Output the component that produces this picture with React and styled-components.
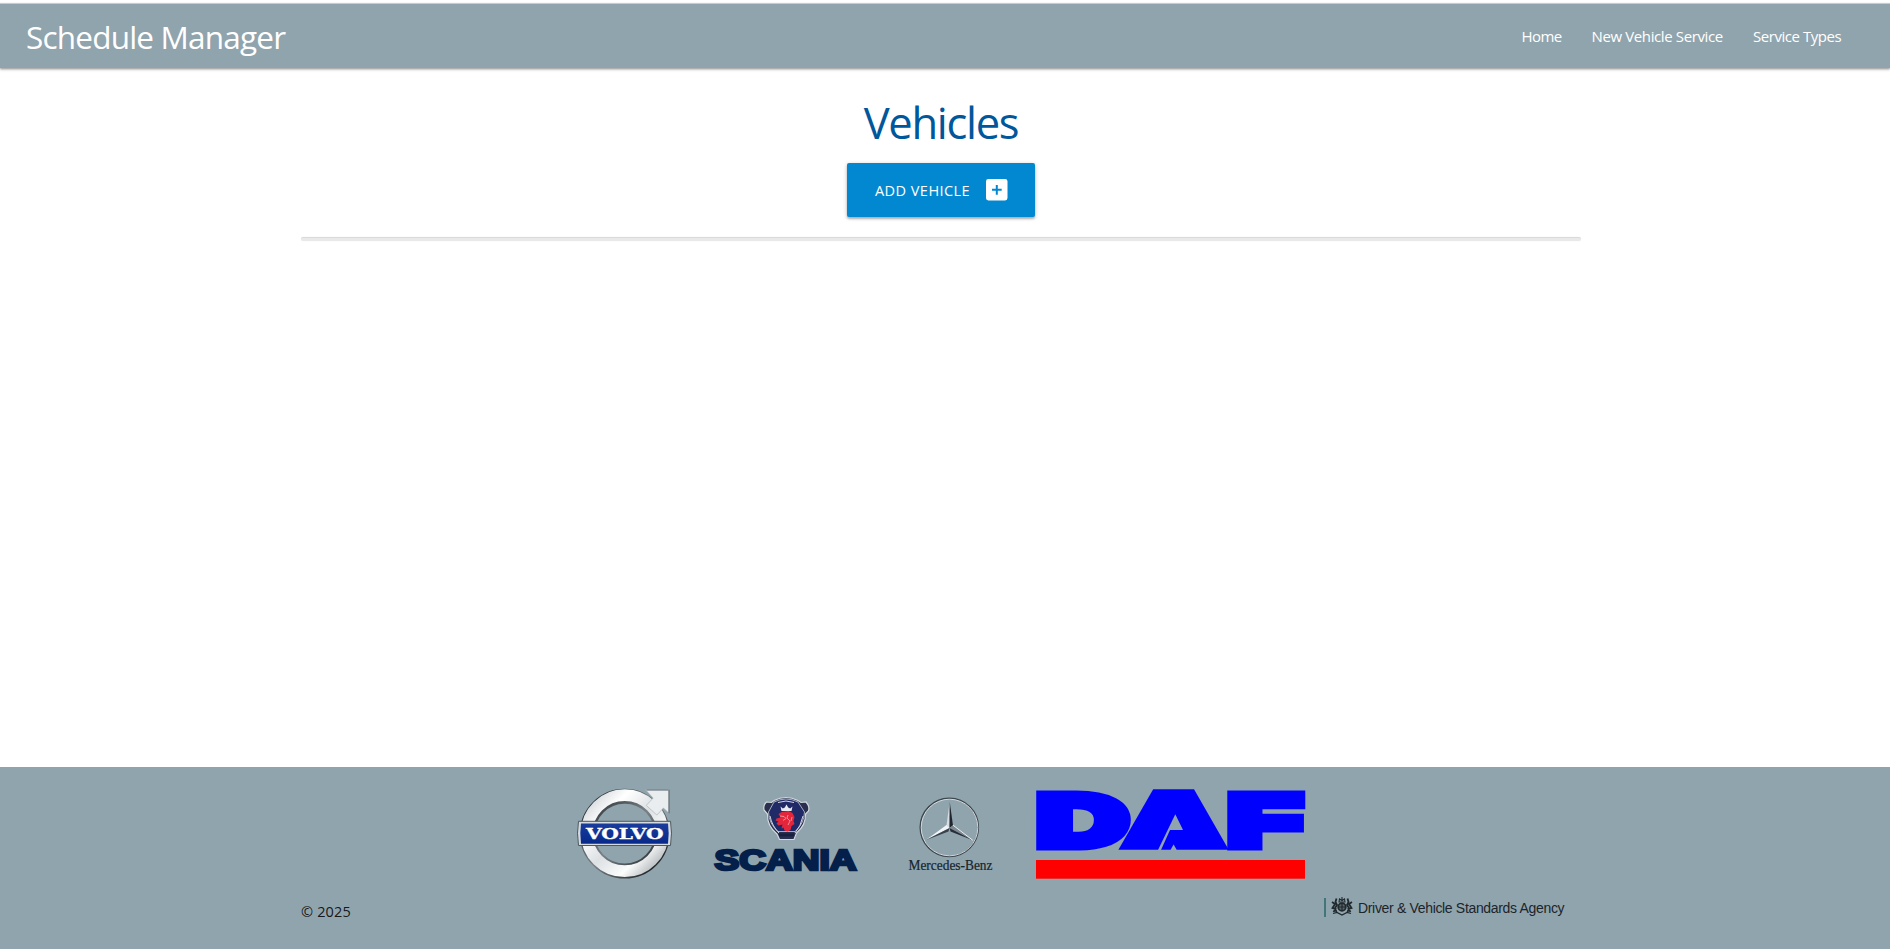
import React from "react";
import styled, { createGlobalStyle } from "styled-components";

const GlobalStyle = createGlobalStyle`
  * { box-sizing: border-box; }
  body {
    margin: 0;
    background: #fff;
    color: rgba(0, 0, 0, 0.87);
    font-family: "Open Sans", "Noto Sans", sans-serif;
    font-size: 15px;
    line-height: 1.5;
  }
`;

const Page = styled.div`
  display: flex;
  flex-direction: column;
  height: 949px;
  overflow: hidden;
  padding-top: 3px;
`;

const NavBar = styled.nav`
  display: flex;
  justify-content: space-between;
  height: 65px;
  flex: none;
  padding: 0 34px 0 26px;
  color: #fff;
  background: #90a4ae;
  border-top: 1px solid #c5cdd0;
  box-shadow: 0 1px 2px rgba(0, 0, 0, 0.35), 0 2px 3px rgba(0, 0, 0, 0.12);
`;

const Brand = styled.a`
  font-size: 31.5px;
  line-height: 66px;
  letter-spacing: -0.8px;
  white-space: nowrap;
`;

const NavLinks = styled.ul`
  display: flex;
  margin: 0;
  padding: 0;
  list-style: none;
`;

const NavLink = styled.li`
  width: ${(p) => p.$width}px;
  padding: 0 15px;
  line-height: 65px;
  letter-spacing: ${(p) => p.$tracking}px;
  white-space: nowrap;
`;

const Main = styled.main`
  display: flex;
  flex-direction: column;
  align-items: center;
  flex: 1;
  padding-right: 8px;
`;

const Title = styled.h1`
  margin: 23px 0 0;
  height: 72px;
  color: #01579b;
  font-size: 43.5px;
  font-weight: 400;
  line-height: 64px;
  letter-spacing: -1.3px;
`;

const AddButton = styled.button`
  display: flex;
  align-items: center;
  justify-content: space-between;
  width: 188px;
  height: 54px;
  padding: 0 27px 0 28px;
  border: 0;
  border-radius: 2px;
  color: #fff;
  background: #0288d1;
  font: inherit;
  font-size: 14.5px;
  line-height: 20px;
  letter-spacing: 0.45px;
  white-space: nowrap;
  box-shadow: 0 2px 2px rgba(0, 0, 0, 0.2), 0 1px 4px rgba(0, 0, 0, 0.22);
`;

const AddLabel = styled.span`
  padding-top: 2px;
`;

const Divider = styled.div`
  width: 1280px;
  height: 4px;
  margin-top: 20px;
  background: #e9e9e9;
  border-top: 1px solid #dadada;
  border-radius: 2px;
  box-shadow: 0 0 2px rgba(0, 0, 0, 0.06);
`;

const Footer = styled.footer`
  flex: none;
  height: 182px;
  padding: 22px 8px 0 0;
  background: #90a4ae;
`;

const LogoRow = styled.div`
  display: flex;
  justify-content: center;
  height: 90px;
`;

const Logo = styled.svg`
  display: block;
  flex: none;
  overflow: visible;
  margin: ${(p) => p.$top}px ${(p) => p.$gap}px 0 0;
`;

const FooterBottom = styled.div`
  display: flex;
  justify-content: space-between;
  width: 1280px;
  margin: 17px auto 0;
`;

const Copyright = styled.span`
  line-height: 32px;
  font-size: 14.5px;
  letter-spacing: 0.15px;
`;

const Agency = styled.div`
  display: flex;
  align-items: flex-start;
  width: 257px;
  height: 24px;
  gap: 5px;
`;

const AgencyBar = styled.span`
  width: 2px;
  height: 19px;
  margin-top: 2px;
  background: #41777a;
`;

const AgencyName = styled.span`
  color: #1c2529;
  font-family: "Liberation Sans", sans-serif;
  font-size: 14px;
  line-height: 25px;
  letter-spacing: -0.33px;
  white-space: nowrap;
`;

const AddIcon = () => (
  <svg width="22" height="22" viewBox="0 0 22 22">
    <rect width="21.5" height="21.5" rx="2.4" fill="#fff" />
    <path d="M10.8 6v9.7M6 10.8h9.7" stroke="#0288d1" strokeWidth="2" />
  </svg>
);

const VolvoLogo = () => (
  <Logo width="95" height="90" $top={0} $gap={41}>
    <defs>
      <linearGradient id="ring" x1="0" y1="0" x2="1" y2="1">
        <stop offset="0" stopColor="#c9ced2" />
        <stop offset=".25" stopColor="#fff" />
        <stop offset=".5" stopColor="#dde1e4" />
        <stop offset=".75" stopColor="#fbfcfc" />
        <stop offset="1" stopColor="#9ba2a7" />
      </linearGradient>
      <linearGradient id="rim" x1="0" y1="0" x2="1" y2="1">
        <stop offset="0" stopColor="#22282b" />
        <stop offset=".5" stopColor="#7a8287" />
        <stop offset="1" stopColor="#16191b" />
      </linearGradient>
      <linearGradient id="plate" x1="0" y1="0" x2="0" y2="1">
        <stop offset="0" stopColor="#1a3c9c" />
        <stop offset="1" stopColor="#06298b" />
      </linearGradient>
    </defs>
    <circle cx="47.7" cy="44.7" r="37.4" fill="none" stroke="url(#rim)" strokeWidth="15" />
    <circle cx="47.7" cy="44.2" r="38" fill="none" stroke="url(#ring)" strokeWidth="11.8" />
    <path d="M68.5.8H92v23.4l-5.6-5.2-6.6 7-10.5-9.6 6.8-7.3z" fill="#e9edf0" stroke="#a3abb0" strokeWidth=".6" />
    <path d="M92 .8v23.4" stroke="#555f66" />
    <path d="M69.5 1l22 0" stroke="#626c72" />
    <path d="M1.5 32.3h92Q95.5 44 93.5 56.5h-92Q-.5 44 1.5 32.3z" fill="#d4dade" stroke="#4d575f" strokeWidth="1" />
    <path d="M4 34.4h87Q92.400 44 91 54.800H4Q2.600 44 4 34.400z" fill="url(#plate)" />
    <text
      x="9"
      y="50"
      textLength="77.500"
      lengthAdjust="spacingAndGlyphs"
      fontFamily="DejaVu Serif, serif"
      fontWeight="700"
      fontSize="15"
      fill="#fff"
      stroke="#fff"
      strokeWidth=".3"
    >
      VOLVO
    </text>
  </Logo>
);

const ScaniaLogo = () => (
  <Logo width="145" height="75" $top={8} $gap={50}>
    <path
      d="M61 3.500Q73-2.500 85 3.500L88 5.500L93 5Q97 9.500 95.500 14L92.500 17Q93 28 83.500 36L81 42.500H66.500L64 37Q54 29 54.500 17L51 13Q50 8 53.500 5L58.500 5.500z"
      fill="#29304f"
      stroke="#d3d9de"
      strokeWidth="1.200"
    />
    <path d="M61 5Q73-1 85 5L91.500 15Q91 27 82 34.500H65Q56 27 55.500 15z" fill="#202a67" stroke="#c6cdd5" strokeWidth=".8" />
    <path d="M57 19q2 10 9 17M90 19q-2 10-8 17M65 5.500q8-3 16 0" fill="none" stroke="#e7eaf0" strokeWidth=".9" />
    <path d="M66 38h15" stroke="#17203e" strokeWidth="3" />
    <path d="M67.500 9.500l2.300 2 2-1 1.700-3 1.700 3 2 1 2.300-2-1 4.500h-10z" fill="#e8eaf2" />
    <path
      d="M65.500 17l3-2 7-1 4 2 2 4-1 4 1 3-3 2-1 4-3 1.500-3-1-1-3-2 1 1-4-4 1-2-2 2-2-3-1 1-2 4-1z"
      fill="#e3263b"
    />
    <path d="M67 19l4 .5 2 2-3 2M75 18l-1 3 3 3-2 4M79 20l-1 4" fill="none" stroke="#f0bfc0" strokeWidth=".7" />
    <text
      x="1.500"
      y="73"
      textLength="142"
      lengthAdjust="spacingAndGlyphs"
      fontFamily="Liberation Sans, Arial, sans-serif"
      fontWeight="700"
      fontSize="29"
      fill="#04204a"
      stroke="#04204a"
      strokeWidth="2.600"
    >
      SCANIA
    </text>
  </Logo>
);

const MercedesLogo = () => (
  <Logo width="85" height="75" $top={8} $gap={43}>
    <circle cx="41.300" cy="30.300" r="29" fill="none" stroke="#3d474e" strokeWidth="1.700" />
    <circle cx="41.500" cy="30.500" r="28.300" fill="none" stroke="#dde3e6" strokeWidth=".9" />
    <path d="M41.700 4.500L38.500 28.500 41.500 31z" fill="#d7dde2" />
    <path d="M41.700 4.500L45 28.500 41.500 31z" fill="#20262f" />
    <path d="M17.500 43.300L38.500 28 41.500 31z" fill="#f1f4f6" />
    <path d="M17.500 43.300L41.500 31 40.500 34.500z" fill="#39424c" />
    <path d="M64.800 43.300L45 28 41.500 31z" fill="#7d8891" />
    <path d="M64.800 43.300L41.500 31 42.500 34.500z" fill="#252d38" />
    <path d="M45 28.200L64.800 43.300" stroke="#edf1f3" strokeWidth="1" />
    <text
      x=".5"
      y="73"
      textLength="84"
      lengthAdjust="spacingAndGlyphs"
      fontFamily="Liberation Serif, serif"
      fontSize="14.500"
      fill="#17242c"
      stroke="#17242c"
      strokeWidth=".2"
    >
      Mercedes-Benz
    </text>
  </Logo>
);

const DafLogo = () => (
  <Logo width="269" height="89" $top={1} $gap={0}>
    <g
      fontFamily="Liberation Sans, Arial, sans-serif"
      fontWeight="700"
      fontSize="71"
      fill="#00f"
      stroke="#00f"
      strokeWidth="11"
      strokeMiterlimit="3"
    >
      <text transform="translate(1.400 54.500) scale(1.735 1)">D</text>
      <text transform="translate(107 48.200) scale(1.600 1)" fontSize="53" strokeWidth="23.500">
        A
      </text>
      <text transform="translate(192.600 54.500) scale(1.660 1)">F</text>
    </g>
    <path d="M139.300 24.300L147 40H134L125 60H122z" fill="#90a4ae" />
    <rect y="70" width="269" height="18.700" fill="#f00" />
  </Logo>
);

const Crest = () => (
  <svg width="22" height="20" viewBox="0 0 22 20" fill="none" stroke="#20292d">
    <circle cx="11" cy="11" r="3.800" strokeWidth="1.800" fill="#58666d" />
    <path d="M8 6l.5-3 2.500 1.500 2.500-1.500.5 3zM11 1v4" strokeWidth="1.100" />
    <path d="M5.500 2.500L4.500 6l1.500 3-2 3 1.500 4M1 6l3 2-2.500 4 3 1-2 3M16.500 2.500L17.500 6l-1.500 3 2 3-1.500 4M21 6l-3 2 2.500 4-3 1 2 3" strokeWidth="1.800" />
    <path d="M2 17.500l4-1 5 2.500 5-2.500 4 1M11 8v6M8 11h6" strokeWidth="1.200" />
  </svg>
);

export default function App() {
  return (
    <Page>
      <GlobalStyle />
      <NavBar>
        <Brand>Schedule Manager</Brand>
        <NavLinks>
          <NavLink $width={70} $tracking={-0.6}>Home</NavLink>
          <NavLink $width={161.5} $tracking={-0.38}>New Vehicle Service</NavLink>
          <NavLink $width={118} $tracking={-0.45}>Service Types</NavLink>
        </NavLinks>
      </NavBar>
      <Main>
        <Title>Vehicles</Title>
        <AddButton>
          <AddLabel>ADD VEHICLE</AddLabel>
          <AddIcon />
        </AddButton>
        <Divider />
      </Main>
      <Footer>
        <LogoRow>
          <VolvoLogo />
          <ScaniaLogo />
          <MercedesLogo />
          <DafLogo />
        </LogoRow>
        <FooterBottom>
          <Copyright>© 2025</Copyright>
          <Agency>
            <AgencyBar />
            <Crest />
            <AgencyName>Driver &amp; Vehicle Standards Agency</AgencyName>
          </Agency>
        </FooterBottom>
      </Footer>
    </Page>
  );
}
